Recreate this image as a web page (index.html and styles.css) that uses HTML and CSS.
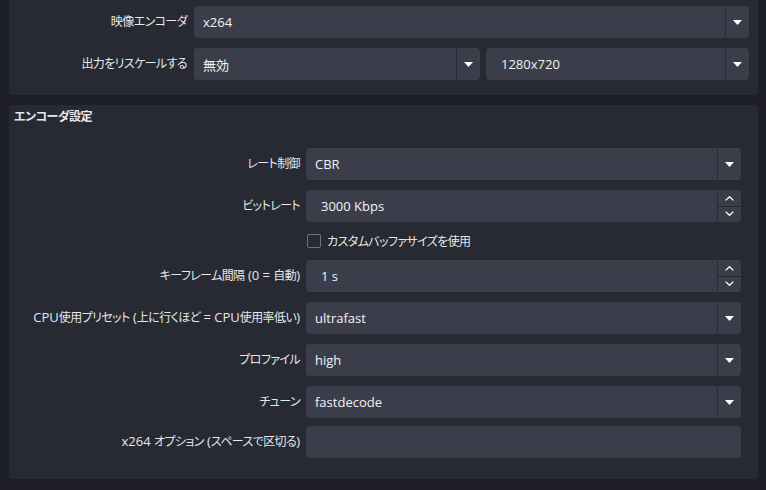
FILE: index.html
```html
<!DOCTYPE html>
<html lang="ja">

<head>
    <meta charset="UTF-8">
    <meta name="viewport" content="width=device-width, initial-scale=1.0">
    <title>出力設定</title>
    <link rel="stylesheet" href="styles.css">
</head>

<body>
    <div class="page">
        <div class="panel panel-top">
            <div class="form form-top">
                <label class="label">映像エンコーダ</label>
                <div class="combo">
                    <span class="value">x264</span>
                    <span class="arrow"><svg width="9" height="5" viewBox="0 0 9 5"><polygon points="0,0 9,0 4.5,5" fill="#fff"/></svg></span>
                </div>

                <label class="label">出力をリスケールする</label>
                <div class="pair">
                    <div class="combo">
                        <span class="value">無効</span>
                        <span class="arrow"><svg width="9" height="5" viewBox="0 0 9 5"><polygon points="0,0 9,0 4.5,5" fill="#fff"/></svg></span>
                    </div>
                    <div class="combo editable">
                        <span class="value">1280x720</span>
                        <span class="arrow"><svg width="9" height="5" viewBox="0 0 9 5"><polygon points="0,0 9,0 4.5,5" fill="#fff"/></svg></span>
                    </div>
                </div>
            </div>
        </div>

        <div class="panel panel-encoder">
            <h2 class="panel-title">エンコーダ設定</h2>
            <div class="form form-encoder">
                <label class="label">レート制御</label>
                <div class="combo">
                    <span class="value">CBR</span>
                    <span class="arrow"><svg width="9" height="5" viewBox="0 0 9 5"><polygon points="0,0 9,0 4.5,5" fill="#fff"/></svg></span>
                </div>

                <label class="label">ビットレート</label>
                <div class="combo editable">
                    <span class="value">3000 Kbps</span>
                    <span class="steps">
                        <span class="step"><svg width="9" height="5" viewBox="0 0 9 5"><polyline points="0.6,4.4 4.5,0.7 8.4,4.4" fill="none" stroke="#fff" stroke-width="1.3"/></svg></span>
                        <span class="step"><svg width="9" height="5" viewBox="0 0 9 5"><polyline points="0.6,0.6 4.5,4.3 8.4,0.6" fill="none" stroke="#fff" stroke-width="1.3"/></svg></span>
                    </span>
                </div>

                <span></span>
                <div class="check">
                    <span class="box"></span>
                    <span>カスタムバッファサイズを使用</span>
                </div>

                <label class="label">キーフレーム間隔<span class="en"> (0 = </span>自動<span class="en">)</span></label>
                <div class="combo editable">
                    <span class="value">1 s</span>
                    <span class="steps">
                        <span class="step"><svg width="9" height="5" viewBox="0 0 9 5"><polyline points="0.6,4.4 4.5,0.7 8.4,4.4" fill="none" stroke="#fff" stroke-width="1.3"/></svg></span>
                        <span class="step"><svg width="9" height="5" viewBox="0 0 9 5"><polyline points="0.6,0.6 4.5,4.3 8.4,0.6" fill="none" stroke="#fff" stroke-width="1.3"/></svg></span>
                    </span>
                </div>

                <label class="label"><span class="en">CPU</span>使用プリセット<span class="en"> (</span>上に行くほど<span class="en"> = CPU</span>使用率低い<span class="en">)</span></label>
                <div class="combo">
                    <span class="value">ultrafast</span>
                    <span class="arrow"><svg width="9" height="5" viewBox="0 0 9 5"><polygon points="0,0 9,0 4.5,5" fill="#fff"/></svg></span>
                </div>

                <label class="label">プロファイル</label>
                <div class="combo">
                    <span class="value">high</span>
                    <span class="arrow"><svg width="9" height="5" viewBox="0 0 9 5"><polygon points="0,0 9,0 4.5,5" fill="#fff"/></svg></span>
                </div>

                <label class="label">チューン</label>
                <div class="combo">
                    <span class="value">fastdecode</span>
                    <span class="arrow"><svg width="9" height="5" viewBox="0 0 9 5"><polygon points="0,0 9,0 4.5,5" fill="#fff"/></svg></span>
                </div>

                <label class="label tight"><span class="en">x264 </span>オプション<span class="en"> (</span>スペースで区切る<span class="en">)</span></label>
                <div class="combo tight"></div>
            </div>
        </div>
    </div>
</body>

</html>
```

FILE: styles.css
```css
body {
    margin: 0;
    background: #1e1f26;
    font-family: 'Open Sans', 'Noto Sans CJK JP', sans-serif;
    font-size: 13px;
    font-feature-settings: "palt";
    color: #e6e7eb;
}

.page {
    padding: 0 8px 0 9px;
}

.panel {
    background: #272a33;
    border-radius: 4px;
}

.panel-top {
    border-radius: 0 0 4px 4px;
    padding: 6px 9px 15px 0;
}

.panel-encoder {
    margin-top: 10px;
    padding: 3px 17px 21px 0;
}

.panel-title {
    margin: 0 0 22px 5px;
    font-size: 12px;
    letter-spacing: -0.5px;
    font-weight: bold;
    line-height: 18px;
}

.form {
    display: grid;
    align-items: center;
    row-gap: 10px;
}

.form-top {
    grid-template-columns: 178px 1fr;
    column-gap: 7px;
}

.form-encoder {
    grid-template-columns: 291px 1fr;
    column-gap: 6px;
}

/* 日本語は少し詰める、英数字は 13px のまま */
.label,
.check {
    font-size: 12px;
    letter-spacing: -0.6px;
}

.label {
    text-align: right;
    white-space: nowrap;
    padding-bottom: 3px;
}

.en {
    font-size: 13px;
    letter-spacing: 0;
}

.tight {
    margin-top: -2px;
}

.pair {
    display: grid;
    grid-template-columns: 286px 1fr;
    gap: 6px;
}

.combo {
    display: flex;
    align-items: center;
    height: 32px;
    background: #3b3e4a;
    border-radius: 4px;
    color: #f2f2f4;
}

.value {
    flex: 1;
    padding-left: 9px;
}

.editable .value {
    padding-left: 15px;
}

.arrow {
    align-self: stretch;
    width: 23px;
    margin: 1px 0;
    border-left: 1px solid #272a33;
    display: flex;
    align-items: center;
    justify-content: center;
}

.steps {
    align-self: stretch;
    width: 23px;
    margin: 1px 0;
    border-left: 1px solid #272a33;
    display: flex;
    flex-direction: column;
}

.step {
    flex: 1;
    display: flex;
    align-items: center;
    justify-content: center;
}

.step + .step {
    border-top: 1px solid #272a33;
}

.check {
    display: flex;
    align-items: center;
    gap: 6px;
    height: 18px;
    padding-left: 1px;
}

.box {
    width: 12px;
    height: 12px;
    border: 1px solid #6e717b;
    border-radius: 2px;
}
```
